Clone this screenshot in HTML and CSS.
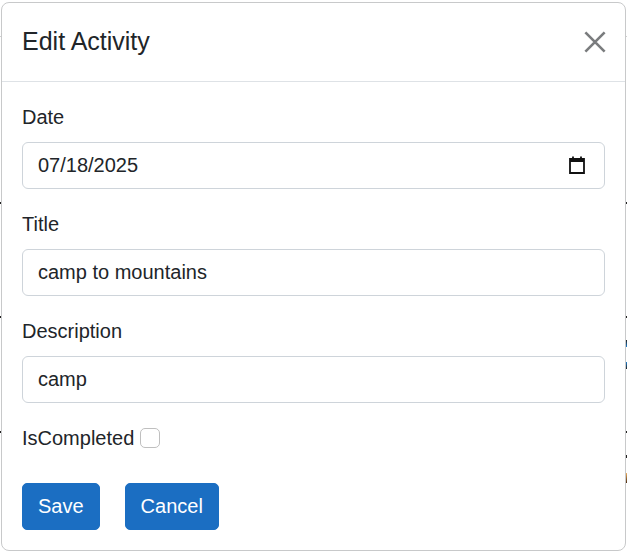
FILE: index.html
```html
<!DOCTYPE html>
<html>
<head>
<meta charset="utf-8">
<title>Edit Activity</title>
<link rel="stylesheet" href="styles.css">
</head>
<body>

    <!-- bits of the page behind the dialog that stick out past its edge -->
    <div class="speck gray left" style="top: 36px"></div>
    <div class="speck gray right" style="top: 36px"></div>
    <div class="speck left" style="top: 202px"></div>
    <div class="speck right" style="top: 202px"></div>
    <div class="speck left" style="top: 316px"></div>
    <div class="speck right" style="top: 316px"></div>
    <div class="speck left" style="top: 431px"></div>
    <div class="speck right" style="top: 431px"></div>
    <div class="speck right glyph-top" style="top: 340px"></div>
    <div class="speck right glyph-bottom" style="top: 362px"></div>
    <div class="speck right" style="top: 455px; height: 3px"></div>
    <div class="speck right glyph-orange" style="top: 473px"></div>
    <div class="speck bottom" style="left: 149px"></div>
    <div class="speck bottom" style="left: 365px"></div>
    <div class="speck bottom" style="left: 582px"></div>

    <div class="modal">
        <div class="modal-header">
            <h5 class="modal-title">Edit Activity</h5>
            <svg class="btn-close" viewBox="0 0 16 16" width="22" height="22">
                <path d="M1 1 L15 15 M15 1 L1 15" stroke="#7a7c7e" stroke-width="1.9" fill="none"/>
            </svg>
        </div>
        <div class="modal-body">
            <div class="field">
                <label>Date</label>
                <div class="form-control date-control">
                    <span>07/18/2025</span>
                    <svg class="calendar" viewBox="0 0 16 18" width="16" height="18">
                        <path d="M1 3 H15 V17 H1 Z" fill="none" stroke="#111" stroke-width="1.8"/>
                        <path d="M1 3 H15 V6 H1 Z" fill="#111"/>
                        <path d="M4 0.5 V3 M12 0.5 V3" stroke="#111" stroke-width="1.8"/>
                    </svg>
                </div>
            </div>
            <div class="field">
                <label>Title</label>
                <div class="form-control">camp to mountains</div>
            </div>
            <div class="field">
                <label>Description</label>
                <div class="form-control">camp</div>
            </div>
            <div class="check-row">
                <label>IsCompleted</label>
                <span class="check"></span>
            </div>
            <div class="buttons">
                <button class="btn">Save</button>
                <button class="btn">Cancel</button>
            </div>
        </div>
    </div>

</body>
</html>
```

FILE: styles.css
```css
* {
    box-sizing: border-box;
}

html, body {
    margin: 0;
    height: 551px;
    overflow: hidden;
}

body {
    padding: 2px 0 0 1px;
    background-color: white;
    font-family: "Liberation Sans", Arial, sans-serif;
    font-size: 20px;
    color: #212529;
}

.speck {
    position: absolute;
    width: 1px;
    height: 2px;
    background-color: #222;
}

.speck.gray {
    height: 1px;
    background-color: #d0d0d0;
}

.speck.left {
    left: 0;
}

.speck.right {
    left: 626px;
}

.speck.bottom {
    top: 550px;
    width: 2px;
    height: 1px;
}

.speck.glyph-top {
    height: 7px;
    background: linear-gradient(#222, #1c7fd0);
}

.speck.glyph-bottom {
    height: 7px;
    background: linear-gradient(#1c7fd0, #222);
}

.speck.glyph-orange {
    height: 10px;
    background: linear-gradient(#f0b060, #4a2a10);
}

.modal {
    position: relative;
    width: 625px;
    height: 549px;
    background-color: white;
    border: 1px solid #c8c9ca;
    border-radius: 8px;
}

.modal-header {
    display: flex;
    align-items: center;
    justify-content: space-between;
    height: 79px;
    padding: 0 19px 2px 20px;
    border-bottom: 1px solid #dee2e6;
}

.modal-title {
    margin: 0;
    font-size: 25px;
    font-weight: normal;
}

.btn-close {
    margin-top: 2px;
}

.modal-body {
    padding: 20px 20px 0;
}

.field {
    margin-bottom: 20px;
}

label {
    display: block;
    line-height: 30px;
}

.form-control {
    display: flex;
    align-items: center;
    height: 47px;
    margin-top: 10px;
    padding: 0 15px;
    border: 1px solid #ced4da;
    border-radius: 6px;
}

.date-control {
    justify-content: space-between;
    padding-right: 19px;
}

.calendar {
    margin-bottom: 2px;
}

.check-row {
    display: flex;
    align-items: center;
    gap: 6px;
}

.check {
    width: 20px;
    height: 20px;
    border: 1px solid #bfbfbf;
    border-radius: 5px;
}

.buttons {
    display: flex;
    gap: 25px;
    margin-top: 30px;
}

.btn {
    height: 47px;
    padding: 0 15px;
    border: 1px solid #1b6ec2;
    border-radius: 5px;
    background-color: #1b6ec2;
    color: white;
    font-family: inherit;
    font-size: 20px;
}
```
